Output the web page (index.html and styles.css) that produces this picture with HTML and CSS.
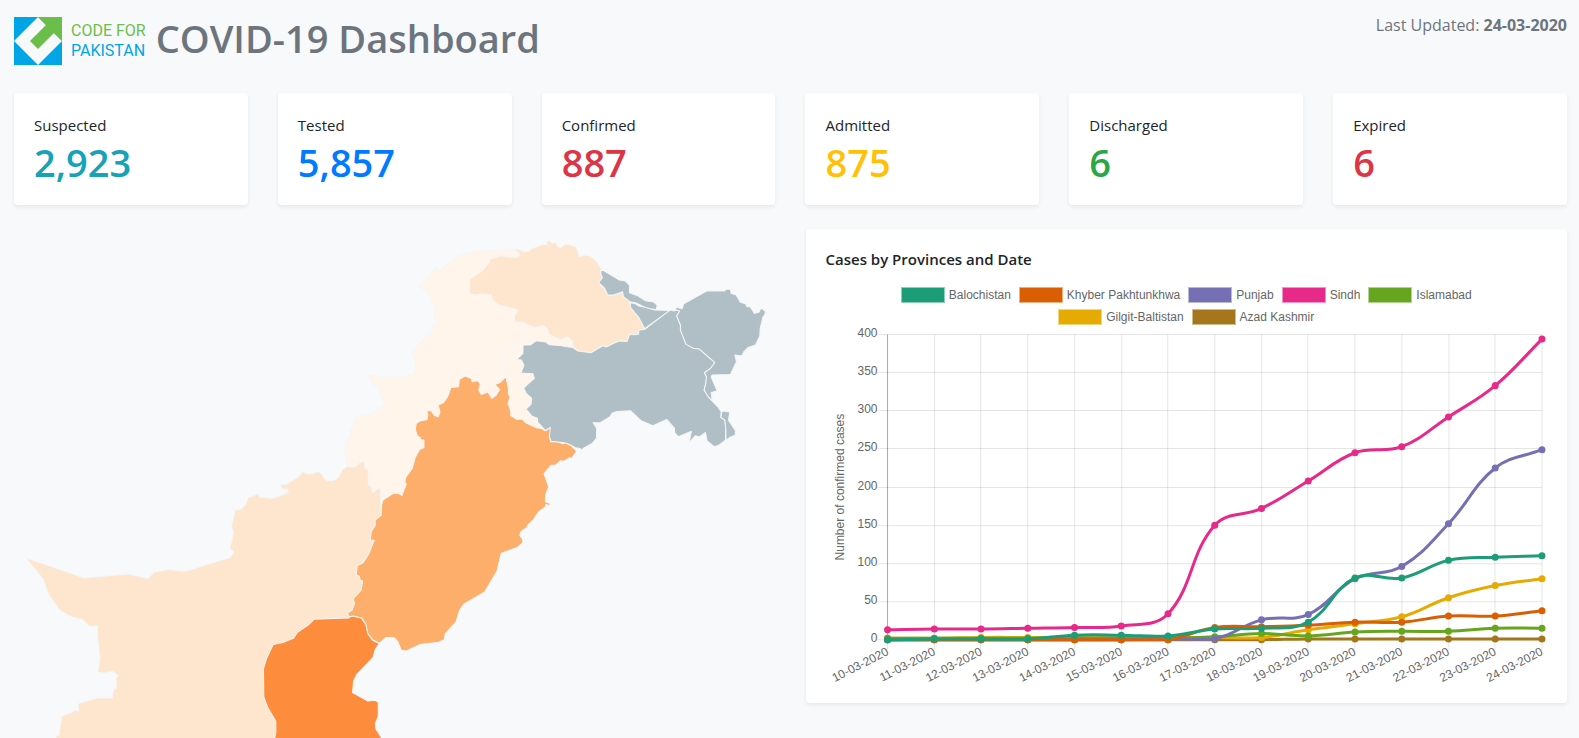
FILE: index.html
```html
<!DOCTYPE html>
<html lang="en">
<head>
<meta charset="utf-8">
<meta name="viewport" content="width=device-width, initial-scale=1">
<title>COVID-19 Dashboard</title>
<link rel="stylesheet" href="styles.css">
</head>
<body>
<header class="header">
  <div class="logo">
    <svg class="logo-mark" viewBox="0 0 48 48" aria-hidden="true">
      <path fill="#00a5e5" d="M0 0H48V48H0Z"/>
      <path fill="#f8f9fb" d="M24 0L48 24L24 48L0 24Z"/>
      <path fill="#6cbe4b" d="M24 0H48V24L40 16L24 32L16 24L32 8Z"/>
    </svg>
    <div class="logo-text"><span class="logo-green">CODE FOR</span><span class="logo-blue">PAKISTAN</span></div>
  </div>
  <h1 class="title">COVID-19 Dashboard</h1>
  <p class="updated">Last Updated: <strong>24-03-2020</strong></p>
</header>
<main>
  <section class="stats">
    <div class="card"><div class="label">Suspected</div><div class="value info">2,923</div></div>
    <div class="card"><div class="label">Tested</div><div class="value primary">5,857</div></div>
    <div class="card"><div class="label">Confirmed</div><div class="value danger">887</div></div>
    <div class="card"><div class="label">Admitted</div><div class="value warning">875</div></div>
    <div class="card"><div class="label">Discharged</div><div class="value success">6</div></div>
    <div class="card"><div class="label">Expired</div><div class="value danger">6</div></div>
  </section>
  <section class="panels">
    <svg class="map" viewBox="14 229 761 509" role="img" aria-label="Map of confirmed cases by province">
      <g transform="translate(400 230) scale(.33333)">
        <path class="kp" d="M338 57L220 65 172 78 158 92 148 98 130 112 124 124 105 114 93 127 88 137 56 167 75 183 88 197 95 217 104 238 100 262 108 278 95 290 95 306 75 320 45 350 34 370 46 390 46 415 42 430 0 442 -60 440 -90 433 -97 440 -82 468 -63 475 -60 498 -45 521 -85 551 -115 555 -138 565 -140 585 -150 598 -146 615 -166 640 -162 690 -161 710 -110 705 -100 780 -58 775 -55 820 40 790 100 600 270 520 310 500 320 580 430 610 440 590 440 345 530 350 500 300 430 280 380 180 345 82 357 80 357 69Z"/>
        <path class="inner" d="M380 290L383 305 368 325 330 360 310 362 307 385 318 440"/>
        <path class="low" d="M340 57L357 58 372 66 385 64 392 56 410 50 428 42 438 45 440 34 448 31 455 40 467 37 470 47 480 53 497 41 528 50 537 80 550 75 570 78 590 95 603 118 601 130 606 143 595 158 605 170 613 175 622 195 640 195 667 185 669 200 688 215 690 232 715 262 733 298 716 300 714 313 687 314 680 334 655 333 617 351 607 347 572 368 533 363 518 350 516 333 503 320 482 330 447 314 441 297 430 286 402 293 368 277 343 275 342 258 352 239 292 223 275 208 273 194 245 192 222 195 207 188 208 147 245 123 268 97 268 88 303 77 325 82 355 82 357 70Z"/>
      </g>
      <g transform="translate(0 440) scale(.33333)">
        <path class="low" d="M78 353L252 413 385 401 443 415 462 396 502 388 555 393 690 352 702 336 689 325 700 277 694 257 705 210 724 206 738 190 743 174 774 161 779 172 820 174 864 157 862 147 846 146 840 134 857 133 896 109 907 94 918 101 938 101 953 95 966 102 972 115 982 122 993 122 1007 118 1016 109 1025 90 1038 80 1065 80 1077 68 1092 63 1094 84 1104 90 1104 133 1113 140 1118 158 1130 147 1142 143 1141 185 1143 225 1160 230 1120 380 1080 535 900 700 850 900 168 900 168 885 177 885 185 828 218 815 220 809 236 811 234 790 293 773 337 773 340 747 349 743 348 714 354 707 338 693 313 699 293 695 300 655 292 590 293 557 269 559 247 538 215 530 180 511 145 462 130 418Z"/>
        <path class="high" d="M942 537L1046 533 1049 528 1058 527 1083 533 1097 553 1103 580 1117 600 1137 610 1125 628 1118 652 1070 702 1060 722 1057 757 1103 782 1125 780 1134 786 1134 828 1125 850 1127 866 1145 894 1145 910 820 910 827 878 827 843 802 800 791 770 790 685 800 653 819 613 848 607 880 594 892 576 927 552Z"/>
      </g>
      <g transform="translate(330 360) scale(.33333)">
        <path class="mid" d="M362 82L385 80 387 58 405 48 424 56 425 65 437 63 443 62 450 72 445 90 453 103 473 96 485 115 497 106 508 88 493 73 508 68 527 50 535 90 533 97 539 112 533 130 542 155 541 166 560 178 575 177 585 187 618 203 634 205 645 212 662 200 657 232 662 245 680 245 698 251 705 247 722 256 739 273 723 296 720 292 700 303 690 302 675 315 662 315 641 341 655 380 646 403 645 425 660 430 658 436 646 433 645 440 625 455 608 480 592 495 590 502 573 513 568 525 577 538 577 548 560 562 513 579 500 632 463 695 400 732 388 750 377 785 345 820 342 838 325 846 268 853 228 872 213 870 203 845 192 832 167 832 147 849 127 838 113 820 107 792 95 773 68 767 57 770 52 758 65 750 73 730 69 715 93 690 97 662 90 660 87 648 78 645 81 617 98 608 115 582 132 540 120 540 123 515 135 495 135 480 153 465 154 435 158 420 190 399 206 400 215 406 228 372 224 365 226 352 246 325 255 292 268 268 281 262 281 240 270 238 270 231 262 229 255 208 258 190 270 182 290 179 293 165 289 151 303 152 312 166 324 170 329 155 324 135 340 127 352 110Z"/>
      </g>
      <g class="none" transform="translate(400 230) scale(.33333)">
        <path d="M368 345L390 345 407 332 437 336 447 344 478 346 516 352 533 363 572 368 607 347 617 351 655 333 680 334 687 314 714 313 716 300 733 298 805 242 815 240 820 243 830 240 838 243 829 258 840 285 840 300 857 343 880 355 895 356 943 397 930 415 912 428 918 440 916 460 911 480 925 502 952 530 962 545 961 562 973 570 976 595 975 630 955 645 942 650 920 632 915 607 897 620 884 617 866 638 873 603 834 620 823 608 822 594 799 568 757 587 721 571 691 542 649 544 634 550 630 559 600 578 578 578 589 595 588 625 575 640 548 655 544 661 540 655 525 653 508 643 493 638 452 633 447 620 450 592 435 601 412 576 411 564 395 558 377 537 392 523 394 505 378 490 370 474 385 460 402 445 398 431 362 429 371 405 363 390 349 388 368 370Z"/>
        <path d="M690 218L703 220 715 228 735 232 763 240 808 241 733 296 715 262 690 232Z"/>
        <path d="M603 118L657 150 675 153 687 165 687 188 712 197 735 212 760 216 770 225 768 238 750 236 735 232 705 218 688 215 669 200 667 185 640 195 622 195 613 175 595 158 606 143 601 130Z"/>
        <path d="M838 243L826 240 827 231 845 236 850 221 920 182 972 183 977 178 990 178 992 190 1007 195 1020 217 1035 221 1040 230 1049 230 1062 250 1075 247 1082 234 1094 243 1094 252 1087 262 1079 295 1078 318 1065 345 1043 352 1030 365 1024 378 1003 375 1008 395 990 433 935 435 932 440 950 482 932 488 935 510 925 502 911 480 916 460 918 440 912 428 930 415 943 397 895 356 880 355 857 343 840 300 840 285 829 258Z"/>
        <path d="M965 543L988 546 984 570 1005 602 1004 615 988 622 977 630 976 595 973 570 961 562Z"/>
      </g>
    </svg>
    <div class="card">
      <h2 class="card-title">Cases by Provinces and Date</h2>
      <ul class="legend" id="legend"></ul>
      <svg class="chart" id="chart" viewBox="0 0 721 355" role="img" aria-label="Number of confirmed cases by date"></svg>
    </div>
  </section>
</main>
<script src="chart.js"></script>
</body>
</html>
```
FILE: styles.css
```css
* { box-sizing: border-box; }
body {
  margin: 0;
  padding: 0 12px 0 14px;
  background: #f8f9fb;
  color: #212529;
  font-family: "Open Sans", "Noto Sans", sans-serif;
  font-size: 15px;
  line-height: 24px;
  overflow-x: hidden;
}
h1, h2, p, ul { margin: 0; padding: 0; }
.header { display: flex; align-items: flex-start; padding-top: 13px; height: 93px; color: #6c757d; }
.logo { display: flex; align-items: center; gap: 9px; padding-top: 4px; }
.logo-mark { display: block; width: 48px; height: 48px; }
.logo-text { display: flex; flex-direction: column; font: 16px/20px Roboto, sans-serif; }
.logo-green { color: #6cbe4b; }
.logo-blue { color: #00a5e5; }
.title { margin-left: 10px; font-size: 38px; line-height: 50px; font-weight: 600; }
.updated { margin-left: auto; font-size: 16px; }
.stats { display: grid; grid-template-columns: repeat(6, 1fr); gap: 30px; }
.card {
  padding: 20px;
  background: #fff;
  border-radius: 4px;
  box-shadow: 0 2px 4px rgba(0, 0, 0, .075);
}
.stats .card { height: 112px; }
.value { font-size: 38px; line-height: 50px; font-weight: 600; }
.info { color: #17a2b8; }
.primary { color: #007bff; }
.danger { color: #dc3545; }
.warning { color: #ffc107; }
.success { color: #28a745; }
.panels { display: grid; grid-template-columns: 1fr 1fr; gap: 30px; align-items: start; padding-top: 24px; }
.map { display: block; width: 100%; height: auto; }
.map path { stroke: #f4f6f7; stroke-width: 3; stroke-linejoin: round; }
.map .kp { fill: #fff5eb; }
.map .inner { fill: none; }
.map .low { fill: #fee6ce; }
.map .mid { fill: #fdae6b; }
.map .high { fill: #fd8d3c; }
.none { fill: #b0bec5; }
.card-title { font-size: 15px; line-height: 20px; font-weight: 600; }
.legend {
  display: flex;
  flex-wrap: wrap;
  justify-content: center;
  gap: 6px 8px;
  width: 600px;
  max-width: 100%;
  margin: 18px auto 3px;
  list-style: none;
  color: #666;
  font: 12px/16px "Liberation Sans", Arial, sans-serif;
}
.legend li { display: flex; gap: 4px; }
.swatch { width: 44px; height: 16px; border: 1px solid rgba(255, 255, 255, .5); }
.chart { display: block; width: 100%; height: auto; overflow: visible; font: 12px "Liberation Sans", Arial, sans-serif; }
.chart text { fill: #666; }
.grid { stroke: rgba(0, 0, 0, .1); }
.axis { stroke: rgba(0, 0, 0, .35); }
.line { fill: none; stroke-width: 3; }
```
FILE: chart.js
```js
const series = [
  ['Balochistan', '#1b9e77', [0, 1, 1, 1, 6, 6, 5, 14, 15, 23, 81, 81, 104, 108, 110]],
  ['Khyber Pakhtunkhwa', '#d95f02', [0, 0, 0, 0, 0, 0, 0, 16, 17, 19, 23, 23, 31, 31, 38]],
  ['Punjab', '#7570b3', [0, 0, 0, 0, 0, 0, 1, 1, 26, 33, 80, 96, 152, 225, 249]],
  ['Sindh', '#e7298a', [13, 14, 14, 15, 16, 18, 34, 150, 172, 208, 245, 253, 292, 333, 394]],
  ['Islamabad', '#66a61e', [2, 2, 2, 2, 2, 2, 2, 4, 8, 5, 10, 11, 11, 15, 15]],
  ['Gilgit-Baltistan', '#e6ab02', [2, 2, 3, 3, 3, 3, 3, 3, 3, 13, 21, 30, 55, 71, 80]],
  ['Azad Kashmir', '#a6761d', [0, 0, 0, 0, 0, 0, 0, 0, 0, 1, 1, 1, 1, 1, 1]]
];
const area = { left: 61.5, right: 715.5, top: 6.5, bottom: 311.5 };
const step = (area.right - area.left) / 14;
const px = i => area.left + i * step;
const py = v => area.bottom - v * (area.bottom - area.top) / 400;
const crisp = n => Math.floor(n) + 0.5;
let out = '';

for (let i = 0; i < 15; i++) {
  const x = crisp(px(i));
  out += `<path class="${i ? 'grid' : 'axis'}" d="M${x} ${area.top}V${area.bottom + (i ? 10 : 0)}"/>`;
  if (!i) out += `<path class="grid" d="M${x} ${area.bottom}v10"/>`;
  out += `<text text-anchor="end" transform="translate(${px(i)} ${area.bottom + 11}) rotate(-27)" y="4">${10 + i}-03-2020</text>`;
}
for (let v = 0; v <= 400; v += 50) {
  const y = crisp(area.bottom - v * (area.bottom - area.top) / 400);
  out += `<path class="grid" d="M51.5 ${y}H${area.right}"/><text text-anchor="end" x="51.5" y="${y + 2.5}">${v}</text>`;
}
out += '<text text-anchor="middle" transform="translate(18 159) rotate(-90)">Number of confirmed cases</text>';

// Smooth curve with tension 0.4, control points kept inside the plot area.
function curve(points) {
  const cap = y => Math.max(area.top, Math.min(area.bottom, y));
  const ctrl = points.map((c, i) => {
    const p = points[i - 1] || c, n = points[i + 1] || c;
    const a = Math.hypot(c[0] - p[0], c[1] - p[1]), b = Math.hypot(n[0] - c[0], n[1] - c[1]);
    const fa = 0.4 * a / (a + b), fb = 0.4 * b / (a + b);
    const dx = n[0] - p[0], dy = n[1] - p[1];
    return [c[0] - fa * dx, cap(c[1] - fa * dy), c[0] + fb * dx, cap(c[1] + fb * dy)];
  });
  return points.reduce((d, c, i) => i
    ? `${d}C${ctrl[i - 1][2]} ${ctrl[i - 1][3]} ${ctrl[i][0]} ${ctrl[i][1]} ${c[0]} ${c[1]}`
    : `M${c[0]} ${c[1]}`, '');
}
[...series].reverse().forEach(([, color, data]) => {
  const points = data.map((v, i) => [px(i), py(v)]);
  out += `<path class="line" stroke="${color}" d="${curve(points)}"/>`;
  points.forEach(p => { out += `<circle cx="${p[0]}" cy="${p[1]}" r="3.5" fill="${color}"/>`; });
});
document.getElementById('chart').innerHTML = out;
document.getElementById('legend').innerHTML = series
  .map(([name, color]) => `<li><span class="swatch" style="background:${color}"></span>${name}</li>`).join('');
```
